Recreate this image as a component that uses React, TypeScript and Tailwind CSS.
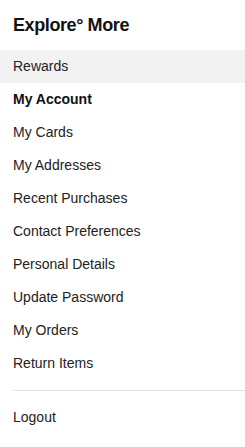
const items = [
  'My Cards',
  'My Addresses',
  'Recent Purchases',
  'Contact Preferences',
  'Personal Details',
  'Update Password',
  'My Orders',
  'Return Items',
];

export default function App() {
  return (
    <div className="w-[245px] min-h-[447px] bg-white text-[#222] font-['Liberation_Sans',Arial,sans-serif]">
      <div className="h-[50px] flex items-center px-[13px]">
        <h1 className="text-[18px] font-bold tracking-[-0.4px] text-[#111]">Explore° More</h1>
      </div>
      <nav className="flex flex-col text-[14px]">
        <a className="h-[33px] flex items-center px-[13px] bg-[#f2f2f2]">Rewards</a>
        <div className="h-[33px] flex items-center px-[13px] font-bold text-[#111]">My Account</div>
        {items.map((item) => (
          <a key={item} className="h-[33px] flex items-center px-[13px]">
            {item}
          </a>
        ))}
        <div className="ml-[13px] my-[10px] border-t border-[#e2e2e2]" />
        <a className="h-[33px] flex items-center px-[13px]">Logout</a>
      </nav>
    </div>
  );
}
